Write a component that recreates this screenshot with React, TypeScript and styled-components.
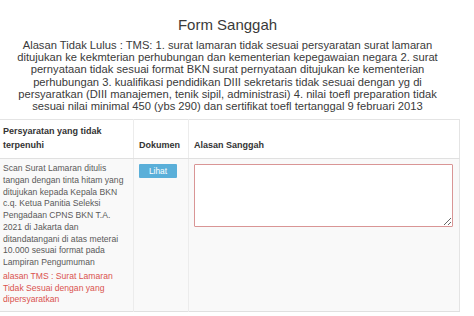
import styled, { createGlobalStyle } from "styled-components";

const GlobalStyle = createGlobalStyle`
  body {
    margin: 0;
    background: #ffffff;
    font-family: "Liberation Sans", Arial, sans-serif;
  }
`;

const Wrapper = styled.div`
  width: 459px;
  margin-left: -2px;
  padding-top: 16px;
`;

const Title = styled.h3`
  margin: 0;
  font-size: 15px;
  line-height: 18px;
  font-weight: normal;
  color: #3a3a3a;
  text-align: center;
`;

const Reason = styled.p`
  margin: 5px 0 7px;
  font-size: 11.2px;
  line-height: 12.2px;
  color: #3a3a3a;
  text-align: center;
`;

const Line = styled.span`
  display: block;
  white-space: nowrap;
`;

const Table = styled.table`
  width: 459px;
  border-collapse: collapse;
  table-layout: fixed;
  border-top: 1px solid #e4e4e4;
  border-right: 1px solid #e4e4e4;
`;

// widths are content widths, the 5px padding on each side comes on top
const HeadCell = styled.th<{ w: number }>`
  width: ${(props) => props.w}px;
  padding: 4px 5px 6px;
  font-size: 9px;
  line-height: 14px;
  font-weight: bold;
  color: #333;
  text-align: left;
  vertical-align: bottom;
  border-left: 1px solid #ececec;
  border-bottom: 1px solid #e0e0e0;
  background: #ffffff;
  &:first-child {
    border-left: none;
  }
`;

const BodyRow = styled.tr`
  background: #f9f9f9;
  border-bottom: 1px solid #e0e0e0;
`;

const Cell = styled.td`
  padding: 4px 5px 5px;
  font-size: 8.6px;
  line-height: 11.75px;
  color: #5a5a5a;
  vertical-align: top;
  border-left: 1px solid #ececec;
  &:first-child {
    border-left: none;
  }
`;

const Danger = styled.div`
  margin-top: 2px;
  color: #d9534f;
`;

const Button = styled.button`
  display: block;
  width: 38px;
  height: 14px;
  margin-top: 1px;
  padding: 0;
  border: none;
  border-radius: 1px;
  background: #5aafd9;
  color: #ffffff;
  font-family: "Liberation Sans", Arial, sans-serif;
  font-size: 8.4px;
`;

const Area = styled.textarea`
  display: block;
  box-sizing: border-box;
  width: 259px;
  height: 63px;
  margin-top: 1px;
  border: 1px solid #d99595;
  border-radius: 1px;
  background: #ffffff;
`;

const reasonLines = [
  "Alasan Tidak Lulus : TMS: 1. surat lamaran tidak sesuai persyaratan surat lamaran",
  "ditujukan ke kekmterian perhubungan dan kementerian kepegawaian negara 2. surat",
  "pernyataan tidak sesuai format BKN surat pernyataan ditujukan ke kementerian",
  "perhubungan 3. kualifikasi pendidikan DIII sekretaris tidak sesuai dengan yg di",
  "persyaratkan (DIII manajemen, tenik sipil, administrasi) 4. nilai toefl preparation tidak",
  "sesuai nilai minimal 450 (ybs 290) dan sertifikat toefl tertanggal 9 februari 2013",
];

const requirementLines = [
  "Scan Surat Lamaran ditulis",
  "tangan dengan tinta hitam yang",
  "ditujukan kepada Kepala BKN",
  "c.q. Ketua Panitia Seleksi",
  "Pengadaan CPNS BKN T.A.",
  "2021 di Jakarta dan",
  "ditandatangani di atas meterai",
  "10.000 sesuai format pada",
  "Lampiran Pengumuman",
];

const tmsLines = [
  "alasan TMS : Surat Lamaran",
  "Tidak Sesuai dengan yang",
  "dipersyaratkan",
];

function App() {
  return (
    <Wrapper>
      <GlobalStyle />
      <Title>Form Sanggah</Title>
      <Reason>
        {reasonLines.map((line) => (
          <Line key={line}>{line}</Line>
        ))}
      </Reason>
      <Table>
        <thead>
          <tr>
            <HeadCell w={125}>
              Persyaratan yang tidak
              <br />
              terpenuhi
            </HeadCell>
            <HeadCell w={44}>Dokumen</HeadCell>
            <HeadCell w={260}>Alasan Sanggah</HeadCell>
          </tr>
        </thead>
        <tbody>
          <BodyRow>
            <Cell>
              {requirementLines.map((line) => (
                <Line key={line}>{line}</Line>
              ))}
              <Danger>
                {tmsLines.map((line) => (
                  <Line key={line}>{line}</Line>
                ))}
              </Danger>
            </Cell>
            <Cell>
              <Button>Lihat</Button>
            </Cell>
            <Cell>
              <Area />
            </Cell>
          </BodyRow>
        </tbody>
      </Table>
    </Wrapper>
  );
}

export default App;
